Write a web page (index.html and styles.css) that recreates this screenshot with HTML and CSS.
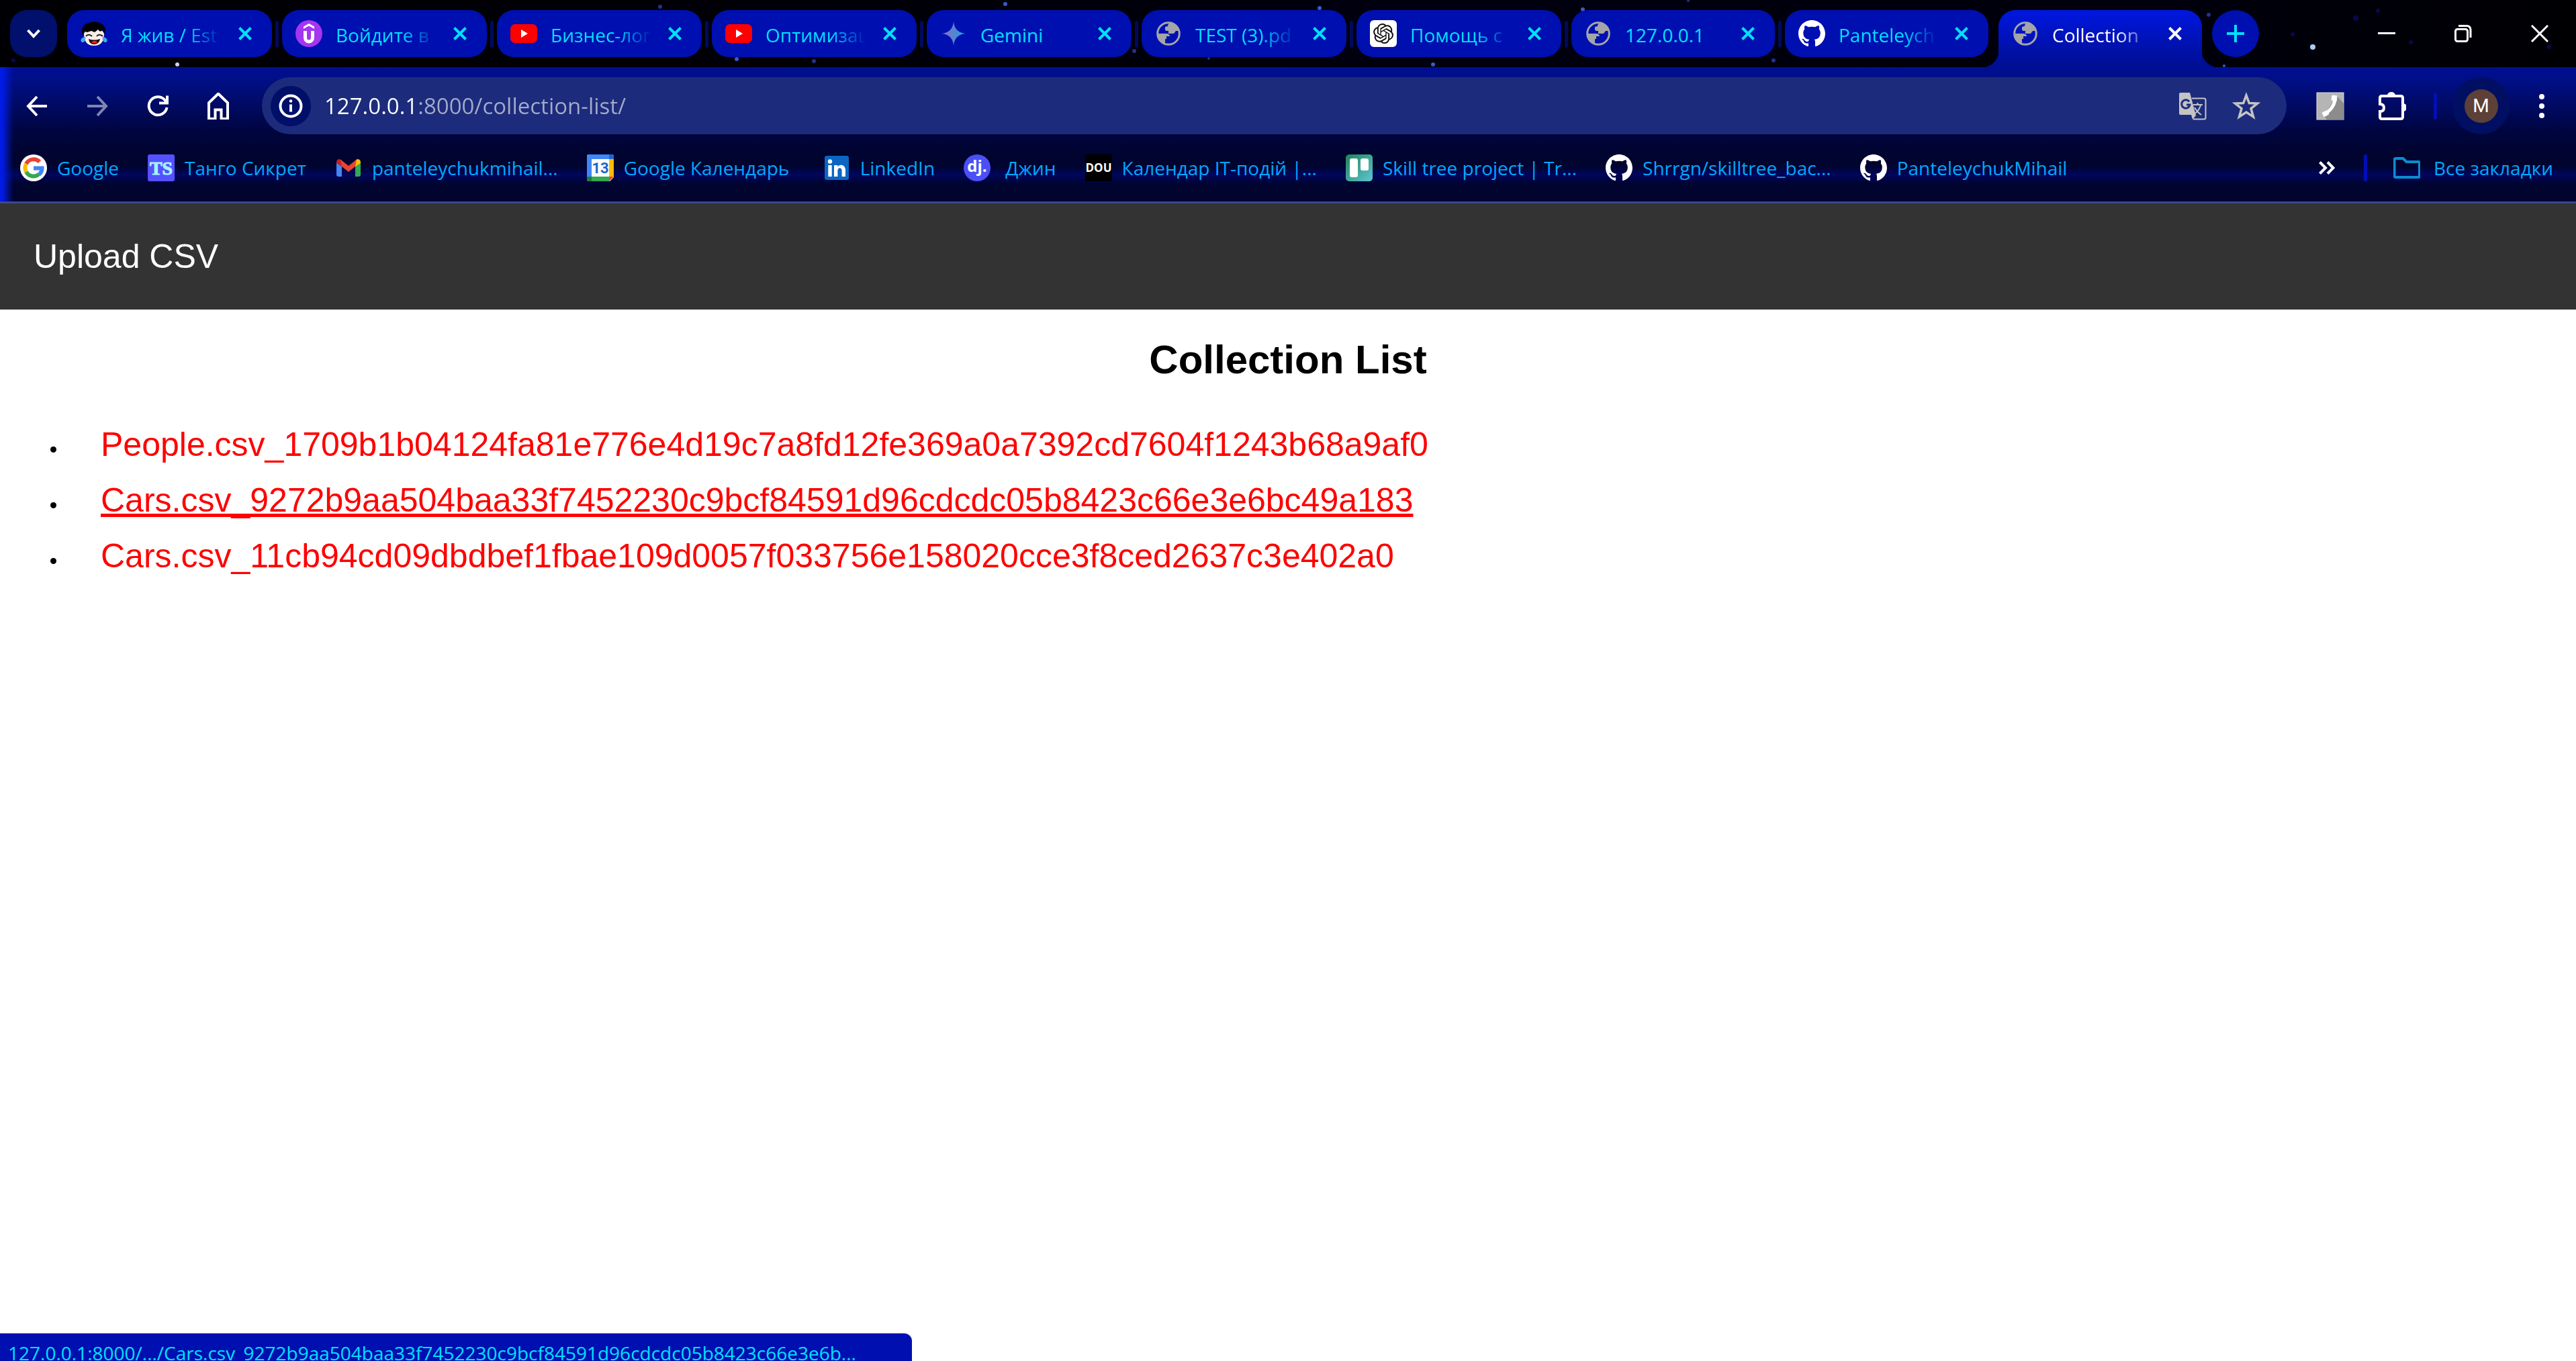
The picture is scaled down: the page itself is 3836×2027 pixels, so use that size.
FILE: index.html
```html
<!DOCTYPE html>
<html lang="ru">
<head>
<meta charset="utf-8">
<title>Collection List</title>
<link rel="stylesheet" href="styles.css">
</head>
<body>
<svg class="defs" width="0" height="0" aria-hidden="true">
  <symbol id="x" viewBox="0 0 20 20"><path d="M1.500 1.500 18.500 18.500M18.500 1.500 1.500 18.500" fill="none" stroke="currentColor" stroke-width="4"/></symbol>
  <symbol id="globe" viewBox="0 0 40 40"><circle cx="20" cy="20" r="16.300" fill="none" stroke="currentColor" stroke-width="3"/><path d="M22 4c-2 1-3 3-3 5l-4 1v4c0 2 3 2 5 2v4h8l3-4h5c-1-6-6-12-14-12z" fill="currentColor"/><path d="M4 20h13c3 0 5 2 5 4h-5v4h-2v7C8 33 4 28 4 20z" fill="currentColor"/></symbol>
  <symbol id="github" viewBox="0 0 16 16"><path fill="#fff" d="M8 0C3.580 0 0 3.580 0 8c0 3.540 2.290 6.530 5.470 7.590.400.070.550-.170.550-.380 0-.190-.010-.820-.010-1.490-2.010.370-2.530-.490-2.690-.940-.090-.230-.480-.940-.820-1.130-.280-.150-.680-.520-.010-.530.630-.010 1.080.580 1.230.820.720 1.210 1.870.870 2.330.660.070-.520.280-.870.510-1.070-1.780-.200-3.640-.890-3.640-3.950 0-.870.310-1.590.820-2.150-.080-.200-.360-1.020.080-2.120 0 0 .670-.210 2.200.820.640-.180 1.320-.270 2-.270s1.360.090 2 .270c1.530-1.040 2.200-.820 2.200-.820.440 1.100.160 1.920.080 2.120.510.560.820 1.270.820 2.150 0 3.070-1.870 3.750-3.650 3.950.290.250.540.730.540 1.480 0 1.070-.010 1.930-.010 2.200 0 .210.150.460.550.380A8.010 8.010 0 0 0 16 8c0-4.420-3.580-8-8-8z"/></symbol>
  <symbol id="youtube" viewBox="0 0 40 40"><rect y="6" width="40" height="28" rx="7" fill="#f00"/><path d="M16 14v12l10-6z" fill="#fff"/></symbol>
</svg>

<header class="browser">
  <div class="strip">
    <svg class="stars" aria-hidden="true">
      <g fill="#c9cfff"><circle cx="264" cy="96" r="3"/></g>
      <g fill="#3a5bc8"><circle cx="1097" cy="88" r="3"/><circle cx="1497" cy="6" r="3"/><circle cx="1965" cy="12" r="3"/><circle cx="2134" cy="96" r="3"/><circle cx="2357" cy="14" r="3"/><circle cx="3312" cy="98" r="2"/></g>
      <g fill="#26308a"><circle cx="983" cy="10" r="3"/><circle cx="1212" cy="91" r="3"/><circle cx="1689" cy="76" r="3"/><circle cx="1800" cy="87" r="2"/><circle cx="2514" cy="1" r="2"/><circle cx="2641" cy="90" r="3"/><circle cx="3289" cy="22" r="3"/></g>
      <g fill="#080850"><circle cx="3414" cy="51" r="3"/><circle cx="3508" cy="27" r="4"/><circle cx="3541" cy="16" r="3"/><circle cx="3590" cy="63" r="3"/><circle cx="3796" cy="70" r="3"/><circle cx="20" cy="90" r="3"/></g>
      <circle cx="3444" cy="70" r="4" fill="#a9ccff"/>
    </svg>
    <button class="search" aria-label="Поиск вкладок"><svg width="20" height="14" viewBox="0 0 20 14"><path d="M1.500 2 10 11 18.500 2" fill="none" stroke="#fff" stroke-width="4"/></svg></button>
    <nav class="tabs" aria-label="Вкладки">
      <div class="tab"><svg class="ico" viewBox="0 0 40 40"><path d="M5 20q0 18 15 18t15-18q-4-8-15-8T5 20z" fill="#fbeee6"/><path d="M2 20C1 9 7 5 11 5c8-5 23-2 26 8l-1 8-3-6-4 2-3-3-5 4-5-2-6 2-4-1-3 5z" fill="#000"/><path d="M8 24c2-3 6-3 9 0M24 24c2-3 6-3 9 0" stroke="#222" stroke-width="2" fill="none"/><path d="M12 28q8 3 17 0c-1 6-5 8-9 8s-7-2-8-8z" fill="#220808"/><path d="M16 33c3-3 7-3 9 0-2 2-7 2-9 0z" fill="#f02020"/><path d="M7 25c-7 1-8 6-5 8 4 0 6-3 5-8zM33 25c7 1 8 6 5 8-4 0-6-3-5-8z" fill="#43a7ee"/></svg><a href="#">Я жив / Est</a><button aria-label="Закрыть"><svg><use href="#x"/></svg></button></div>
      <div class="tab"><svg class="ico" viewBox="0 0 40 40"><circle cx="20" cy="20" r="20" fill="#a435f0"/><path d="M12 9.500 20 5l8 4.500V13l-8-4.500L12 13z" fill="#fff"/><path d="M14.500 16v10c0 8 11 8 11 0V16" fill="none" stroke="#fff" stroke-width="5"/></svg><a href="#">Войдите в</a><button aria-label="Закрыть"><svg><use href="#x"/></svg></button></div>
      <div class="tab"><svg class="ico"><use href="#youtube"/></svg><a href="#">Бизнес-лог</a><button aria-label="Закрыть"><svg><use href="#x"/></svg></button></div>
      <div class="tab"><svg class="ico"><use href="#youtube"/></svg><a href="#">Оптимизац</a><button aria-label="Закрыть"><svg><use href="#x"/></svg></button></div>
      <div class="tab"><svg class="ico" viewBox="0 0 40 40"><defs><linearGradient id="gem"><stop offset="0" stop-color="#9168c0"/><stop offset=".5" stop-color="#5684d1"/><stop offset="1" stop-color="#1ba1e3"/></linearGradient></defs><path d="M20 2c1 11 7 17 18 18-11 1-17 7-18 18-1-11-7-17-18-18 11-1 17-7 18-18z" fill="url(#gem)"/></svg><a class="short" href="#">Gemini</a><button aria-label="Закрыть"><svg><use href="#x"/></svg></button></div>
      <div class="tab"><svg class="ico globe"><use href="#globe"/></svg><a href="#">TEST (3).pd</a><button aria-label="Закрыть"><svg><use href="#x"/></svg></button></div>
      <div class="tab"><svg class="ico" viewBox="0 0 40 40"><rect width="40" height="40" rx="6" fill="#fff"/><path transform="translate(5 5) scale(1.250)" fill="#111" d="M22.2819 9.8211a5.9847 5.9847 0 0 0-.5157-4.9108 6.0462 6.0462 0 0 0-6.5098-2.9A6.0651 6.0651 0 0 0 4.9807 4.1818a5.9847 5.9847 0 0 0-3.9977 2.9 6.0462 6.0462 0 0 0 .7427 7.0966 5.98 5.98 0 0 0 .511 4.9107 6.051 6.051 0 0 0 6.5146 2.9001A5.9847 5.9847 0 0 0 13.2599 24a6.0557 6.0557 0 0 0 5.7718-4.2058 5.9894 5.9894 0 0 0 3.9977-2.9001 6.0557 6.0557 0 0 0-.7475-7.0729zm-9.022 12.6081a4.4755 4.4755 0 0 1-2.8764-1.0408l.1419-.0804 4.7783-2.7582a.7948.7948 0 0 0 .3927-.6813v-6.7369l2.02 1.1686a.071.071 0 0 1 .038.052v5.5826a4.504 4.504 0 0 1-4.4945 4.4944zm-9.6607-4.1254a4.4708 4.4708 0 0 1-.5346-3.0137l.142.0852 4.783 2.7582a.7712.7712 0 0 0 .7806 0l5.8428-3.3685v2.3324a.0804.0804 0 0 1-.0332.0615L9.74 19.9502a4.4992 4.4992 0 0 1-6.1408-1.6464zM2.3408 7.8956a4.485 4.485 0 0 1 2.3655-1.9728V11.6a.7664.7664 0 0 0 .3879.6765l5.8144 3.3543-2.0201 1.1685a.0757.0757 0 0 1-.071 0l-4.8303-2.7865A4.504 4.504 0 0 1 2.3408 7.872zm16.5963 3.8558L13.1038 8.364 15.1192 7.2a.0757.0757 0 0 1 .071 0l4.8303 2.7913a4.4944 4.4944 0 0 1-.6765 8.1042v-5.6772a.79.79 0 0 0-.407-.667zm2.0107-3.0231l-.142-.0852-4.7735-2.7818a.7759.7759 0 0 0-.7854 0L9.409 9.2297V6.8974a.0662.0662 0 0 1 .0284-.0615l4.8303-2.7866a4.4992 4.4992 0 0 1 6.6802 4.66zM8.3065 12.863l-2.02-1.1638a.0804.0804 0 0 1-.038-.0567V6.0742a4.4992 4.4992 0 0 1 7.3757-3.4537l-.142.0805L8.704 5.459a.7948.7948 0 0 0-.3927.6813zm1.0976-2.3654l2.602-1.4998 2.6069 1.4998v2.9994l-2.5974 1.4997-2.6067-1.4997Z"/></svg><a href="#">Помощь с</a><button aria-label="Закрыть"><svg><use href="#x"/></svg></button></div>
      <div class="tab"><svg class="ico globe"><use href="#globe"/></svg><a class="short" href="#">127.0.0.1</a><button aria-label="Закрыть"><svg><use href="#x"/></svg></button></div>
      <div class="tab"><svg class="ico"><use href="#github"/></svg><a href="#">Panteleych</a><button aria-label="Закрыть"><svg><use href="#x"/></svg></button></div>
      <div class="tab active"><svg class="ico globe"><use href="#globe"/></svg><a href="#" aria-current="page">Collection</a><button aria-label="Закрыть"><svg><use href="#x"/></svg></button></div>
    </nav>
    <button class="newtab" aria-label="Новая вкладка"><svg width="26" height="26" viewBox="0 0 26 26"><path d="M13 0v26M0 13h26" stroke="#00e1ff" stroke-width="4"/></svg></button>
    <div class="window">
      <button aria-label="Свернуть"><svg viewBox="0 0 26 26"><path d="M0 12.500h26" stroke-width="3"/></svg></button>
      <button aria-label="Развернуть"><svg viewBox="0 0 26 26"><rect x="1.500" y="6.500" width="18" height="18" rx="3"/><path d="M6 1.500h12q6 0 6 6V19"/></svg></button>
      <button aria-label="Закрыть окно"><svg viewBox="0 0 26 26"><path d="M1 1 25 25M25 1 1 25"/></svg></button>
    </div>
  </div>

  <div class="chrome">
    <div class="toolbar">
      <div class="nav">
        <button aria-label="Назад"><svg viewBox="0 0 40 40"><path d="M35 20H8M20 6 7 20 20 34"/></svg></button>
        <button aria-label="Вперёд" disabled><svg viewBox="0 0 40 40"><path d="M5 20h27M20 6l13 14-13 14"/></svg></button>
        <button aria-label="Обновить"><svg viewBox="0 0 40 40"><path d="M33.500 22A13.500 13.500 0 1 1 30 10.500L34 15M34 4.500V15.500H22"/></svg></button>
        <button aria-label="Главная"><svg viewBox="0 0 40 40"><path d="M6 40V16L20 2.500 34 16V40H24.500V26.500h-9V40z" transform="translate(0 -1)"/></svg></button>
      </div>
      <form class="omnibox">
        <button class="info" type="button" aria-label="Сведения о сайте"><svg width="36" height="36" viewBox="0 0 36 36"><circle cx="18" cy="18" r="15.500" fill="none" stroke="#fff" stroke-width="4"/><path d="M18 15.500v11" stroke="#fff" stroke-width="4"/><circle cx="18" cy="10.500" r="2.300" fill="#fff"/></svg></button>
        <input class="url" type="text" aria-label="Адрес" value="127.0.0.1:8000/collection-list/">
        <button class="tool" type="button" aria-label="Перевести"><svg viewBox="0 0 42 42"><path d="M20 9.500h18q2.500 0 2.500 2.500v26q0 2.500-2.500 2.500H22" fill="none" stroke="#c4c4c4" stroke-width="2"/><path d="M3 1h14l9 34-5 6-2-7H3q-2 0-2-2V3q0-2 2-2z" fill="#c4c4c4"/><path d="M16 14.500A6.200 6.200 0 1 0 17 19h-5" fill="none" stroke="#1c2b7b" stroke-width="3"/><path d="M22 19h14M28.500 16v3M33 20q-3 9-10 13M24 23q4 7 10 11" fill="none" stroke="#c4c4c4" stroke-width="2"/></svg></button>
        <button class="tool" type="button" aria-label="Добавить в закладки"><svg viewBox="0 0 42 42"><path d="M21 5l4.300 11.500 12.200.600-9.500 7.600L31.500 37 21 30 10.500 37 14 24.700 4.500 17.100l12.200-.600z" fill="none" stroke="#c4c4c4" stroke-width="3.500"/></svg></button>
      </form>
      <div class="actions">
        <button aria-label="Звонки"><svg viewBox="0 0 42 42"><rect x="1" y="1" width="40" height="40" fill="#b5b5b5" stroke="#ddd"/><path d="M31 6 41 17V41H16L11 36z" fill="#8c8c8c"/><path d="M28 8q1 14-15 25" fill="none" stroke="#fff" stroke-width="5"/><path d="M24 5l7 1-1 8-7-2zM9 31l6-3 4 5-7 4z" fill="#fff" stroke="#fff" stroke-linejoin="round"/></svg></button>
        <button aria-label="Расширения"><svg viewBox="0 0 42 42"><path d="M3 18V9q0-3 3-3h28q3 0 3 3v28q0 3-3 3H6q-3 0-3-3V29q6 0 6-5.500T3 18z" fill="none" stroke="#fff" stroke-width="4"/><path d="M14 5a6 5 0 0 1 12 0zM38 17a5 6 0 0 1 0 12z" fill="#fff"/></svg></button>
        <span class="rule"></span>
        <button class="profile" aria-label="Профиль"><span>M</span></button>
        <button aria-label="Меню"><svg viewBox="0 0 42 42"><g fill="#fff"><circle cx="21" cy="7" r="4"/><circle cx="21" cy="21" r="4"/><circle cx="21" cy="35" r="4"/></g></svg></button>
      </div>
    </div>

    <nav class="bookmarks" aria-label="Закладки">
      <a href="#"><svg class="ico" viewBox="0 0 40 40"><circle cx="20" cy="20" r="20" fill="#fff"/><g fill="none" stroke-width="6"><path d="M29 11A12.500 12.500 0 0 0 9 14" stroke="#ea4335"/><path d="M9 14a12.500 12.500 0 0 0 0 12" stroke="#fbbc05"/><path d="M9 26a12.500 12.500 0 0 0 19 3.500" stroke="#34a853"/><path d="M20 20.500h12.500q0 6-4.500 9.500" stroke="#4285f4"/></g></svg><span>Google</span></a>
      <a href="#"><svg class="ico" viewBox="0 0 40 40"><rect width="40" height="40" rx="3" fill="#5551ff"/><text x="20" y="30" text-anchor="middle" font-family="Liberation Serif, serif" font-weight="bold" font-size="28" fill="#a6f4ff" stroke="#a6f4ff">TS</text></svg><span>Танго Сикрет</span></a>
      <a href="#"><svg class="ico" viewBox="0 0 40 40"><path d="M2 12l8 5v16H5q-3 0-3-3z" fill="#4285f4"/><path d="M30 17l8-5v18q0 3-3 3h-5z" fill="#34a853"/><path d="M2 12q0-5 5-5l3 2v9l-8-5z" fill="#c5221f"/><path d="M38 12q0-5-5-5l-3 2v9l8-5z" fill="#fbbc04"/><path d="M8 7.500 20 17 32 7.500 30 18l-10 8-10-8z" fill="#ea4335"/></svg><span>panteleychukmihail...</span></a>
      <a href="#"><svg class="ico" viewBox="0 0 40 40"><rect width="40" height="40" rx="3" fill="#fff"/><path d="M0 3q0-3 3-3h30v7H7v26H0z" fill="#4285f4"/><path d="M33 0h4q3 0 3 3v4h-7z" fill="#1967d2"/><path d="M33 7h7v26h-7z" fill="#fbbc04"/><path d="M7 33h26v7H7z" fill="#34a853"/><path d="M0 33h7v7H3q-3 0-3-3z" fill="#188038"/><path d="M33 33h7l-7 7z" fill="#ea4335"/><path d="M34 40l6-6v6z" fill="#00042e"/><text x="20" y="28" text-anchor="middle" font-family="Roboto, sans-serif" font-weight="bold" font-size="22" fill="#1a66cf">13</text></svg><span>Google Календарь </span></a>
      <a href="#"><svg class="ico" viewBox="0 0 40 40"><rect x="2" y="2" width="36" height="36" rx="3" fill="#0a66c2"/><circle cx="10" cy="10.500" r="3.200" fill="#fff"/><path d="M7.300 16h5.400v17H7.300zM16 16h5.200v2.300c3-4.500 11.800-3.500 11.800 5V33h-5.400v-9c0-5-6.200-5-6.200 0v9H16z" fill="#fff"/></svg><span>LinkedIn</span></a>
      <a href="#"><svg class="ico" viewBox="0 0 40 40"><circle cx="20" cy="20" r="20" fill="#4a50f5"/><text x="20" y="26" text-anchor="middle" font-family="Open Sans, sans-serif" font-weight="bold" font-size="24" fill="#fff">dj.</text></svg><span> Джин</span></a>
      <a href="#"><svg class="ico" viewBox="0 0 40 40"><rect width="40" height="40" fill="#000"/><text x="20" y="26" text-anchor="middle" font-family="Open Sans, sans-serif" font-weight="bold" font-size="17" fill="#fff">DOU</text></svg><span>Календар IT-подій |...</span></a>
      <a href="#"><svg class="ico" viewBox="0 0 40 40"><defs><linearGradient id="tr" x2="1" y2="1"><stop stop-color="#1f845a"/><stop offset="1" stop-color="#60c6d2"/></linearGradient></defs><rect width="40" height="40" rx="5" fill="url(#tr)"/><rect x="6" y="6" width="12" height="28" rx="3" fill="#fff"/><rect x="22" y="6" width="12" height="18" rx="3" fill="#fff"/></svg><span>Skill tree project | Tr...</span></a>
      <a href="#"><svg class="ico"><use href="#github"/></svg><span>Shrrgn/skilltree_bac...</span></a>
      <a href="#"><svg class="ico"><use href="#github"/></svg><span>PanteleychukMihail</span></a>
      <button class="more" aria-label="Другие закладки"><svg width="24" height="20" viewBox="0 0 24 20"><path d="M1.500 1.500 10 10 1.500 18.500M13 1.500 21.500 10 13 18.500" fill="none" stroke="#fff" stroke-width="4"/></svg></button>
      <span class="rule"></span>
      <a class="all" href="#"><svg class="ico" viewBox="0 0 40 40"><path d="M1.500 8q0-2 2-2h11l5 5H37q2 0 2 2v19q0 2-2 2H3.500q-2 0-2-2z" fill="none" stroke="#0b8ccf" stroke-width="4"/></svg><span>Все закладки</span></a>
    </nav>
  </div>
</header>

<div class="topbar"><a href="#">Upload CSV</a></div>
<main>
  <h1>Collection List</h1>
  <ul>
    <li><a href="#">People.csv_1709b1b04124fa81e776e4d19c7a8fd12fe369a0a7392cd7604f1243b68a9af0</a></li>
    <li><a class="hovered" href="#">Cars.csv_9272b9aa504baa33f7452230c9bcf84591d96cdcdc05b8423c66e3e6bc49a183</a></li>
    <li><a href="#">Cars.csv_11cb94cd09dbdbef1fbae109d0057f033756e158020cce3f8ced2637c3e402a0</a></li>
  </ul>
</main>
<div class="status">127.0.0.1:8000/.../Cars.csv_9272b9aa504baa33f7452230c9bcf84591d96cdcdc05b8423c66e3e6b...</div>
</body>
</html>
```
FILE: styles.css
```css
* { box-sizing: border-box; }
body { margin: 0; background: #fff; font-family: "Liberation Sans", Arial, sans-serif; }
button { border: 0; padding: 0; margin: 0; background: none; display: flex; align-items: center; justify-content: center; flex: none; }
a { text-decoration: none; }
.defs { position: absolute; }
.ico { width: 40px; height: 40px; flex: none; }
.globe { color: #a3a5a8; }

/* browser frame */
.browser { font-family: "Open Sans", "Noto Sans", sans-serif; font-size: 28px; line-height: 40px; border-bottom: 3px solid #3b478f; }
.strip { position: relative; display: flex; align-items: center; height: 100px; padding-left: 15px; background: linear-gradient(90deg, #000004, #000006 30%, #00000f 55%, #00000c 85%, #000003); }
.stars { position: absolute; inset: 0; width: 100%; height: 100%; }
.search { position: relative; width: 70px; height: 70px; border-radius: 25px; background: #00106c; margin-right: 15px; }
.tabs { position: relative; display: flex; align-items: center; flex: 1; gap: 15px; min-width: 0; height: 100px; max-width: 3179px; }
.tab { position: relative; display: flex; align-items: center; flex: 0 1 305px; min-width: 0; height: 70px; padding: 0 25px 0 20px; border-radius: 25px; background: #000fb0; }
.tab:nth-child(n+8) { flex-basis: 303px; }
.tab:nth-child(-n+8)::after { content: ""; position: absolute; right: -10px; top: 16px; width: 5px; height: 40px; border-radius: 3px; background: #000a5c; }
.tab a { flex: 1; min-width: 0; margin: 4px 20px 0 20px; overflow: hidden; white-space: nowrap; color: #00e1ff; mask-image: linear-gradient(90deg, #000 65%, transparent); }
.tab a.short { mask-image: none; }
.tab button { width: 30px; height: 30px; color: #00e1ff; }
.tab button svg { width: 20px; height: 20px; }
.tab.active { align-self: flex-end; height: 85px; padding-bottom: 15px; border-radius: 25px 25px 0 0; background: linear-gradient(#0017e0, #000e92); }
.tab.active a, .tab.active button { color: #fff; }
.tab.active::before, .tab.active::after { content: ""; position: absolute; bottom: 0; width: 25px; height: 25px; }
.tab.active::before { left: -25px; background: radial-gradient(circle at 0 0, transparent 25px, #000e95 26px); }
.tab.active::after { right: -25px; background: radial-gradient(circle at 100% 0, transparent 25px, #000e95 26px); }
.newtab { position: relative; width: 70px; height: 70px; margin-left: 15px; border-radius: 35px; background: #000fb0; }
.window { position: relative; display: flex; gap: 6px; margin-left: auto; }
.window button { width: 108px; height: 100px; }
.window svg { width: 26px; height: 26px; fill: none; stroke: #fff; stroke-width: 3; }

.chrome { background: linear-gradient(90deg, #001be6 3px, #001be600 20px), linear-gradient(#000e92, #000f86 20px, #000540 95px, #00042f 130px, #00042f 148px, #00065c 160px, #00042f 175px, #00042f); }
.toolbar { display: flex; align-items: center; height: 115px; padding: 0 11px 0 15px; }
.nav { display: flex; gap: 10px; }
.nav button { width: 80px; height: 80px; }
.nav button:disabled { opacity: .5; }
.nav svg { width: 40px; height: 40px; fill: none; stroke: #fff; stroke-width: 4; }
.omnibox { display: flex; align-items: center; flex: 1; gap: 10px; height: 85px; margin: 0 25px; padding: 0 25px 0 13px; border-radius: 43px; background: #1c2b7b; }
.info { width: 60px; height: 60px; border-radius: 30px; background: #000f68; }
.url { flex: 1; min-width: 0; border: 0; outline: 0; padding: 0; margin-left: 10px; height: 60px; font: 33px/44px "Open Sans", "Noto Sans", sans-serif; color: #a9b0cf; background: linear-gradient(90deg, #fff 140px, #a3aacb 140px); background-clip: text; -webkit-text-fill-color: transparent; }
.tool { width: 70px; height: 70px; }
.tool svg, .actions svg { width: 42px; height: 42px; }
.actions { display: flex; align-items: center; }
.actions button { width: 80px; height: 80px; margin-right: 12px; }
.rule { flex: none; width: 5px; height: 40px; border-radius: 3px; background: #000fb8; }
.actions .rule { margin-left: 10px; }
.actions .profile { width: 85px; height: 85px; margin: 0 8px 0 23px; border-radius: 50%; background: #000f62; }
.profile span { width: 50px; height: 50px; border-radius: 50%; background: #5d4037; color: #fff; font: 28px/50px Roboto, sans-serif; }
.actions button:last-child { margin-right: 0; }

.bookmarks { display: flex; align-items: center; height: 85px; padding: 0 34px 15px 30px; gap: 43px; }
.bookmarks a { display: flex; align-items: center; gap: 15px; white-space: pre; color: #00a8ff; }
.more { width: 24px; height: 40px; margin-left: auto; }
.bookmarks .all { gap: 20px; margin-left: -4px; }

/* page */
.topbar { padding: 50px; background: #333; font-size: 50px; line-height: 58px; }
.topbar a { color: #fff; }
h1 { margin: 40px 0 62px; text-align: center; font-size: 60px; line-height: 70px; }
ul { margin: 0; padding-left: 100px; font-size: 30px; }
li { margin-bottom: 18px; line-height: 58px; }
li a { margin-left: 50px; font-size: 50px; color: #f00; }
.hovered { text-decoration: underline 5px; text-underline-offset: 3px; text-decoration-skip-ink: none; }
.status { position: fixed; left: 0; bottom: 0; height: 42px; width: 1358px; padding: 9px 0 0 12px; overflow: hidden; white-space: nowrap; border-top-right-radius: 12px; background: #000fb0; border-top: 1px solid #ccd; color: #00e1ff; font: 28px/40px "Open Sans", "Noto Sans", sans-serif; }
```
